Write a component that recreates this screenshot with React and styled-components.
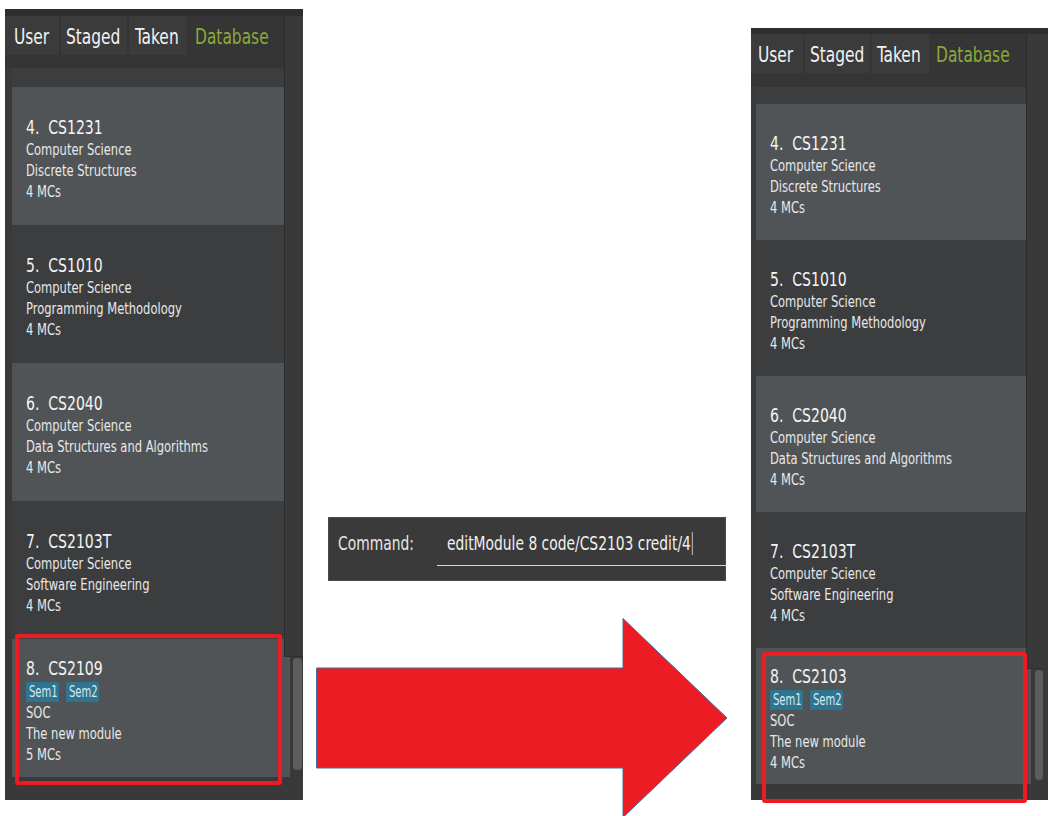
import React from "react";
import styled, { createGlobalStyle } from "styled-components";

const GlobalStyle = createGlobalStyle`
  html, body {
    margin: 0;
    padding: 0;
    background: #ffffff;
  }
  body {
    width: 1056px;
    height: 816px;
    overflow: hidden;
    font-family: "DejaVu Sans Condensed", "DejaVu Sans", sans-serif;
    font-stretch: condensed;
  }
`;

const Page = styled.div`
  display: flex;
  align-items: flex-start;
  width: 1056px;
  height: 816px;
  overflow: hidden;
`;

// text in the screenshots is squashed sideways, so every run of text gets squeezed
const Squeeze = styled.span`
  display: inline-block;
  white-space: pre;
  transform: scaleX(${({ $sx }) => $sx || 0.8});
  transform-origin: 0 50%;
`;

const Panel = styled.div`
  position: relative;
  flex: none;
  width: ${({ $w }) => $w}px;
  height: ${({ $h }) => $h}px;
  margin: ${({ $top }) => $top}px 0 0 ${({ $left }) => $left}px;
  background: #393939;
  display: flex;
  flex-direction: column;
`;

const TopStrip = styled.div`
  flex: none;
  height: ${({ $h }) => $h}px;
  background: #2e2e2e;
`;

const TabBar = styled.div`
  flex: none;
  height: ${({ $h }) => $h}px;
  background: #353535;
  display: flex;
  align-items: flex-start;
  gap: 2px;
`;

const Tab = styled.div`
  width: ${({ $w }) => $w}px;
  height: 39px;
  box-sizing: border-box;
  padding: 2px 0 0 ${({ $pad }) => $pad}px;
  background: ${({ $active }) => ($active ? "transparent" : "#3b3b3b")};
  color: ${({ $active }) => ($active ? "#8aaa3a" : "#f2f2f2")};
  font-size: 22px;
  line-height: 37px;
`;

const List = styled.div`
  flex: 1;
  overflow: hidden;
  padding-left: ${({ $inset }) => $inset}px;
  display: flex;
  flex-direction: column;
`;

const Card = styled.div`
  flex: none;
  width: ${({ $w }) => $w}px;
  height: ${({ $h }) => $h}px;
  box-sizing: border-box;
  padding: 4px 0 0 14px;
  background: ${({ $light }) => ($light ? "#505457" : "#3c3d3f")};
  display: flex;
  flex-direction: column;
  justify-content: center;
  color: #e8e8e8;
`;

const Title = styled.div`
  font-size: 20px;
  line-height: 24px;
  color: #f4f4f4;
`;

const Line = styled.div`
  font-size: 16px;
  line-height: 21px;
`;

const TagRow = styled.div`
  display: flex;
  gap: 7px;
  margin-top: 2px;
`;

const Tag = styled.div`
  width: 33px;
  height: 20px;
  box-sizing: border-box;
  padding-left: 3px;
  border-radius: 2px;
  background: #2d7590;
  color: #dce9ee;
  font-size: 15px;
  line-height: 20px;
  overflow: hidden;
`;

const SideCover = styled.div`
  position: absolute;
  left: ${({ $x }) => $x}px;
  top: ${({ $y }) => $y}px;
  width: ${({ $w }) => $w}px;
  height: ${({ $h }) => $h}px;
  box-sizing: border-box;
  background: #393939;
  border-left: 1px solid #2c2c2c;
  border-bottom: 1px solid #2f2f2f;
`;

const Thumb = styled.div`
  position: absolute;
  left: ${({ $x }) => $x}px;
  top: ${({ $y }) => $y}px;
  width: ${({ $w }) => $w}px;
  height: ${({ $h }) => $h}px;
  border-radius: 4px;
  background: #5d5d5d;
`;

const Highlight = styled.div`
  position: absolute;
  left: ${({ $x }) => $x}px;
  top: ${({ $y }) => $y}px;
  width: ${({ $w }) => $w}px;
  height: 151px;
  box-sizing: border-box;
  border: 4px solid #ed1c24;
  border-radius: 3px;
`;

const Middle = styled.div`
  flex: none;
  width: 448px;
  padding-top: 517px;
  box-sizing: border-box;
  display: flex;
  flex-direction: column;
`;

const CommandBox = styled.div`
  width: 398px;
  height: 64px;
  margin-left: 25px;
  box-sizing: border-box;
  padding: 13px 0 0 9px;
  background: #3a3a3a;
  border: 1px solid #4a4a4a;
  display: flex;
  align-items: flex-start;
  color: #e6e6e6;
  font-size: 20px;
  line-height: 24px;
`;

const Label = styled.div`
  flex: 1;
`;

const Field = styled.div`
  width: 290px;
  height: 35px;
  box-sizing: border-box;
  padding-left: 10px;
  border-bottom: 1px solid #d6d6d6;
  color: #f0f0f0;
`;

const Caret = styled.span`
  display: inline-block;
  width: 1.5px;
  height: 23px;
  margin-left: 1px;
  vertical-align: -5px;
  background: #e8e8e8;
`;

const Arrow = styled.svg`
  display: block;
  margin: 37px 0 0 13px;
`;

const modules = [
  { n: 4, code: "CS1231", lines: ["Computer Science", "Discrete Structures", "4 MCs"] },
  { n: 5, code: "CS1010", lines: ["Computer Science", "Programming Methodology", "4 MCs"] },
  { n: 6, code: "CS2040", lines: ["Computer Science", "Data Structures and Algorithms", "4 MCs"] },
  { n: 7, code: "CS2103T", lines: ["Computer Science", "Software Engineering", "4 MCs"] },
];

const tabNames = ["User", "Staged", "Taken", "Database"];

const ModulePanel = ({ cfg, last }) => (
  <Panel $w={cfg.w} $h={cfg.h} $top={cfg.top} $left={cfg.left}>
    <TopStrip $h={cfg.strip} />
    <TabBar $h={cfg.tabBar}>
      {tabNames.map((name, i) => (
        <Tab key={name} $w={cfg.tabs[i][0]} $pad={cfg.tabs[i][1]} $active={name === "Database"}>
          <Squeeze $sx={0.78}>{name}</Squeeze>
        </Tab>
      ))}
    </TabBar>
    <List $inset={cfg.inset}>
      <Card $w={cfg.cardW} $h={cfg.partial} />
      {modules.map((m, i) => (
        <Card key={m.n} $w={cfg.cardW} $h={cfg.cardH} $light={i % 2 === 0}>
          <Title>
            <Squeeze $sx={0.78}>{`${m.n}.  ${m.code}`}</Squeeze>
          </Title>
          {m.lines.map((l) => (
            <Line key={l}>
              <Squeeze>{l}</Squeeze>
            </Line>
          ))}
        </Card>
      ))}
      <Card $w={cfg.cardW} $h={cfg.cardH} $light>
        <Title>
          <Squeeze $sx={0.78}>{`8.  ${last.code}`}</Squeeze>
        </Title>
        <TagRow>
          <Tag><Squeeze $sx={0.74}>Sem1</Squeeze></Tag>
          <Tag><Squeeze $sx={0.74}>Sem2</Squeeze></Tag>
        </TagRow>
        <Line><Squeeze>SOC</Squeeze></Line>
        <Line><Squeeze>The new module</Squeeze></Line>
        <Line><Squeeze>{last.credit}</Squeeze></Line>
      </Card>
    </List>
    <SideCover $x={cfg.cover.x} $y={cfg.cover.y} $w={cfg.cover.w} $h={cfg.cover.h} />
    <Thumb $x={cfg.thumb.x} $y={cfg.thumb.y} $w={cfg.thumb.w} $h={cfg.thumb.h} />
    <Highlight $x={cfg.mark.x} $y={cfg.mark.y} $w={cfg.mark.w} />
  </Panel>
);

const before = {
  w: 298, h: 791, top: 9, left: 5, strip: 7, tabBar: 52, inset: 7, cardW: 278, cardH: 138, partial: 19,
  tabs: [[54, 9], [66, 5], [58, 6], [82, 6]],
  cover: { x: 279, y: 7, w: 19, h: 641 },
  thumb: { x: 288, y: 649, w: 9, h: 112 },
  mark: { x: 10, y: 625, w: 267 },
};

const after = {
  w: 297, h: 772, top: 28, left: 0, strip: 6, tabBar: 53, inset: 5, cardW: 275, cardH: 136, partial: 17,
  tabs: [[52, 7], [65, 5], [57, 5], [82, 5]],
  cover: { x: 275, y: 6, w: 22, h: 635 },
  thumb: { x: 284, y: 642, w: 8, h: 110 },
  mark: { x: 11, y: 624, w: 265 },
};

export default function App() {
  return (
    <>
      <GlobalStyle />
      <Page>
        <ModulePanel cfg={before} last={{ code: "CS2109", credit: "5 MCs" }} />
        <Middle>
          <CommandBox>
            <Label><Squeeze $sx={0.77}>Command:</Squeeze></Label>
            <Field>
              <Squeeze $sx={0.77}>
                editModule 8 code/CS2103 credit/4<Caret />
              </Squeeze>
            </Field>
          </CommandBox>
          <Arrow width="412" height="200" viewBox="0 0 412 200">
            <polygon
              points="0.5,50 307,50 307,0.5 411,100 307,199.5 307,150 0.5,150"
              fill="#ed1c24"
              stroke="#41719c"
              strokeWidth="1"
            />
          </Arrow>
        </Middle>
        <ModulePanel cfg={after} last={{ code: "CS2103", credit: "4 MCs" }} />
      </Page>
    </>
  );
}
